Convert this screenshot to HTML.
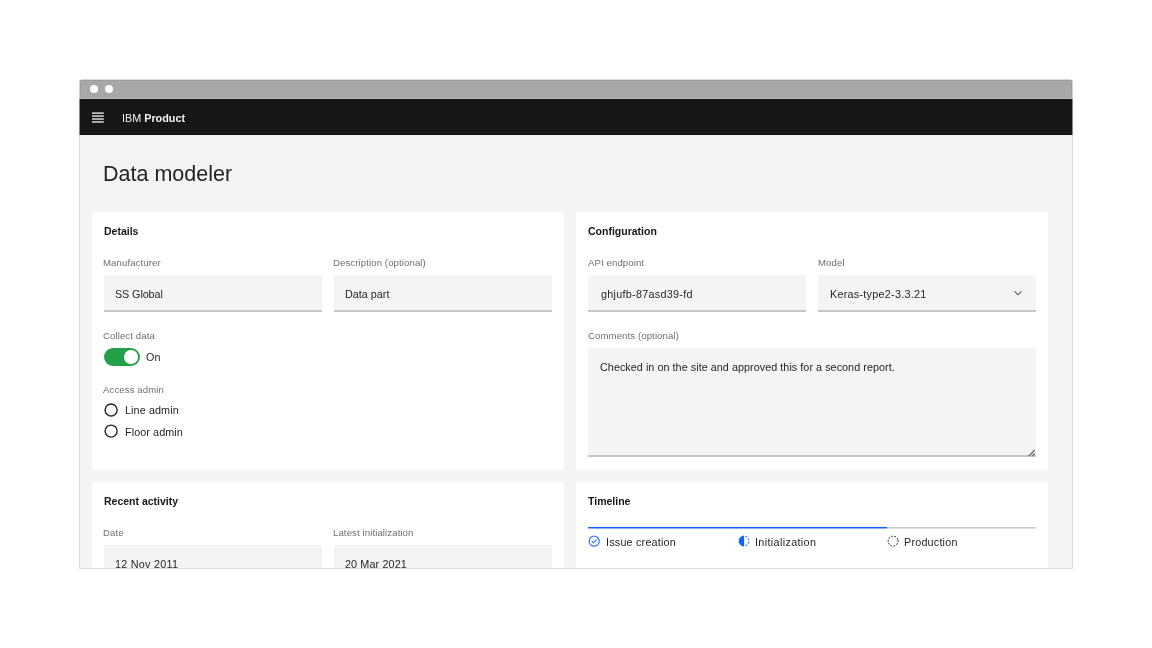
<!DOCTYPE html>
<html><head><meta charset="utf-8">
<style>
*{margin:0;padding:0;box-sizing:border-box}
html,body{width:1152px;height:648px;background:#fff;overflow:hidden;font-family:"Liberation Sans",sans-serif;color:#161616}
.t{will-change:transform}
.a{position:absolute}
.t{position:absolute;white-space:nowrap;line-height:1}
#win{position:absolute;left:79px;top:80px;width:994px;height:489px;border:1px solid #dcdcdc;border-top:none;overflow:hidden;background:#f4f4f4;border-radius:2px 2px 0 0}
.bar{position:absolute;left:0;top:0;width:100%;height:19px;background:#a8a8a8;border-top:1px solid #9e9e9e}
.dot{position:absolute;width:8px;height:8px;border-radius:50%;background:#fff}
.card{position:absolute;background:#fff}
.lbl{font-size:9.6px;color:#6f6f6f;letter-spacing:0.1px}
.body{font-size:10.8px;color:#262626}
.h{font-size:10.5px;font-weight:bold;color:#161616}
.inp{position:absolute;background:#f4f4f4;border-bottom:2px solid #c6c6c6;height:37px}
.radio{position:absolute;width:13px;height:13px;border:1.45px solid #262626;border-radius:50%}
</style></head><body>
<div id="win">
  <div class="bar"></div>
</div>
<!-- overlay absolute in page coordinates -->
<div class="a" style="left:80px;top:98px;width:992px;height:1px;background:#bcbcbc"></div>
<div class="dot" style="left:90px;top:85px"></div>
<div class="dot" style="left:105px;top:85px"></div>
<div class="a" style="left:80px;top:99px;width:992px;height:36px;background:#161616"></div>
<div class="a" style="left:79px;top:99px;width:1px;height:36px;background:#8a8a8a"></div>
<div class="a" style="left:1072px;top:99px;width:1px;height:36px;background:#8a8a8a"></div>
<div class="a" style="left:79px;top:81px;width:1px;height:18px;background:#d2d2d2"></div>
<div class="a" style="left:1072px;top:81px;width:1px;height:18px;background:#d2d2d2"></div>
<div class="a" style="left:80px;top:81px;width:1px;height:17px;background:#9e9e9e"></div>
<div class="a" style="left:1071px;top:81px;width:1px;height:17px;background:#9e9e9e"></div>
<div class="a" style="left:81px;top:79px;width:990px;height:1px;background:#d8d8d8"></div>
<!-- hamburger -->
<svg class="a" style="left:80px;top:99px" width="40" height="36" viewBox="80 99 40 36"><g fill="#e8e8e8"><rect x="92" y="112.4" width="11.8" height="1.4"/><rect x="92" y="115.35" width="11.8" height="1.4"/><rect x="92" y="118.3" width="11.8" height="1.4"/><rect x="92" y="121.25" width="11.8" height="1.4"/></g></svg>
<div class="t" style="left:121.5px;top:112.8px;font-size:10.8px;color:#f4f4f4">IBM <b>Product</b></div>

<div class="t" style="left:102.6px;top:163.6px;font-size:21.5px;color:#242424">Data modeler</div>

<div id="clip" class="a" style="left:80px;top:135px;width:992px;height:433px;overflow:hidden">
<div style="position:absolute;left:-80px;top:-135px;width:1152px;height:648px">
  <!-- cards -->
  <div class="card" style="left:92px;top:211.5px;width:471.5px;height:258px"></div>
  <div class="card" style="left:576px;top:211.5px;width:472px;height:258px"></div>
  <div class="card" style="left:92px;top:481.5px;width:471.5px;height:200px"></div>
  <div class="card" style="left:576px;top:481.5px;width:472px;height:200px"></div>

  <div class="t h" style="left:104px;top:225.8px">Details</div>
  <div class="t lbl" style="left:103.3px;top:258.2px">Manufacturer</div>
  <div class="t lbl" style="left:333.3px;top:258.2px">Description (optional)</div>
  <div class="inp" style="left:104px;top:275px;width:218px"></div>
  <div class="inp" style="left:334px;top:275px;width:218px"></div>
  <div class="t body" style="letter-spacing:-0.1px;left:115.4px;top:288.75px">SS Global</div>
  <div class="t body" style="left:345.4px;top:288.75px">Data part</div>

  <div class="t lbl" style="left:103.3px;top:331.1px">Collect data</div>
  <div class="a" style="left:104px;top:348px;width:36px;height:18px;border-radius:9px;background:#24a148"></div>
  <div class="a" style="left:124.25px;top:350.25px;width:13.5px;height:13.5px;border-radius:50%;background:#fff"></div>
  <div class="t body" style="left:146.4px;top:351.85px">On</div>

  <div class="t lbl" style="left:103.3px;top:385.1px">Access admin</div>
  <svg class="a" style="left:103px;top:402px" width="16" height="16" viewBox="103 402 16 16"><circle cx="111.1" cy="410" r="6" fill="none" stroke="#262626" stroke-width="1.4"/></svg>
  <div class="t body" style="letter-spacing:0.1px;left:125.2px;top:405.3px">Line admin</div>
  <svg class="a" style="left:103px;top:423px" width="16" height="16" viewBox="103 423 16 16"><circle cx="111.1" cy="431.1" r="6" fill="none" stroke="#262626" stroke-width="1.4"/></svg>
  <div class="t body" style="letter-spacing:0.08px;left:125.2px;top:426.5px">Floor admin</div>

  <div class="t h" style="left:588px;top:225.8px">Configuration</div>
  <div class="t lbl" style="left:588px;top:258.2px">API endpoint</div>
  <div class="t lbl" style="left:818px;top:258.2px">Model</div>
  <div class="inp" style="left:588px;top:275px;width:218px"></div>
  <div class="inp" style="left:818px;top:275px;width:218px"></div>
  <div class="t body" style="letter-spacing:0.28px;left:600.6px;top:288.75px">ghjufb-87asd39-fd</div>
  <div class="t body" style="letter-spacing:0.26px;left:829.6px;top:288.75px">Keras-type2-3.3.21</div>
  <svg class="a" style="left:1012px;top:287px" width="12" height="12" viewBox="0 0 16 16"><path d="M8 11L3 6 3.7 5.3 8 9.6 12.3 5.3 13 6z" fill="#161616"/></svg>

  <div class="t lbl" style="left:588px;top:331.1px">Comments (optional)</div>
  <div class="inp" style="left:588px;top:347.5px;width:448px;height:109.5px"></div>
  <div class="t body" style="letter-spacing:0.04px;left:600.4px;top:361.65px">Checked in on the site and approved this for a second report.</div>
  <svg class="a" style="left:1024px;top:446px" width="14" height="12" viewBox="1024 446 14 12"><path d="M1028.8 456 L1034.8 450 M1032.2 456 L1034.8 453.4" stroke="#6a6a6a" stroke-width="1.3" fill="none"/></svg>

  <div class="t h" style="left:104px;top:495.9px">Recent activity</div>
  <div class="t lbl" style="left:103.3px;top:528.3px">Date</div>
  <div class="t lbl" style="left:333.3px;top:528.3px">Latest initialization</div>
  <div class="inp" style="left:104px;top:545px;width:218px"></div>
  <div class="inp" style="left:334px;top:545px;width:218px"></div>
  <div class="t body" style="letter-spacing:0.25px;left:115.4px;top:558.75px">12 Nov 2011</div>
  <div class="t body" style="letter-spacing:0.12px;left:345.4px;top:558.75px">20 Mar 2021</div>

  <div class="t h" style="left:588px;top:495.9px">Timeline</div>
  <div class="a" style="left:588px;top:527px;width:299px;height:1px;background:#0f62fe"></div>
  <div class="a" style="left:588px;top:528px;width:299px;height:1px;background:#87b0fe"></div>
  <div class="a" style="left:887px;top:527px;width:149px;height:1px;background:#c8c8c8"></div><div class="a" style="left:887px;top:528px;width:149px;height:1px;background:#e0e0e0"></div>
  <svg class="a" style="left:587.9px;top:535.2px" width="12.4" height="12.4" viewBox="0 0 32 32"><g fill="#0f62fe" stroke="#0f62fe" stroke-width="0.7"><path d="M14 21.414l-5-5.001L10.413 15 14 18.586 21.585 11 23 12.415 14 21.414z"/><path d="M16 2A14 14 0 1030 16 14 14 0 0016 2zm0 26A12 12 0 1128 16 12 12 0 0116 28z"/></g></svg>
  <div class="t body" style="letter-spacing:0.2px;left:606.4px;top:536.65px">Issue creation</div>
  <svg class="a" style="left:737.6px;top:535.4px" width="12" height="12" viewBox="0 0 32 32"><g fill="#0f62fe" stroke="#0f62fe" stroke-width="0.7"><path d="M23.7642 6.8593l1.2851-1.5315A13.976 13.976 0 0020.8672 2.887l-.6836 1.8776A11.9729 11.9729 0 0123.7642 6.8593zM27.81 14l1.9677-.4128A13.8888 13.8888 0 0028.14 9.0457L26.4087 10A12.52 12.52 0 0127.81 14zM20.1836 27.2354l.6836 1.8776a13.976 13.976 0 004.1821-2.4408l-1.2851-1.5315A11.9729 11.9729 0 0120.1836 27.2354zM26.4087 22L28.14 23a14.14 14.14 0 001.6382-4.5872L27.81 18.0659A12.1519 12.1519 0 0126.4087 22zM16 30V2A14 14 0 0016 30z"/></g></svg>
  <div class="t body" style="letter-spacing:0.35px;left:755.4px;top:536.65px">Initialization</div>
  <svg class="a" style="left:886.8px;top:535.3px" width="12.2" height="12.2" viewBox="0 0 32 32"><circle cx="16" cy="16" r="13" fill="none" stroke="#161616" stroke-width="2.4" stroke-dasharray="4.6 3.57" transform="rotate(-11 16 16)"/></svg>
  <div class="t body" style="letter-spacing:0.2px;left:904.4px;top:536.65px">Production</div>
</div>
</div>
</body></html>
